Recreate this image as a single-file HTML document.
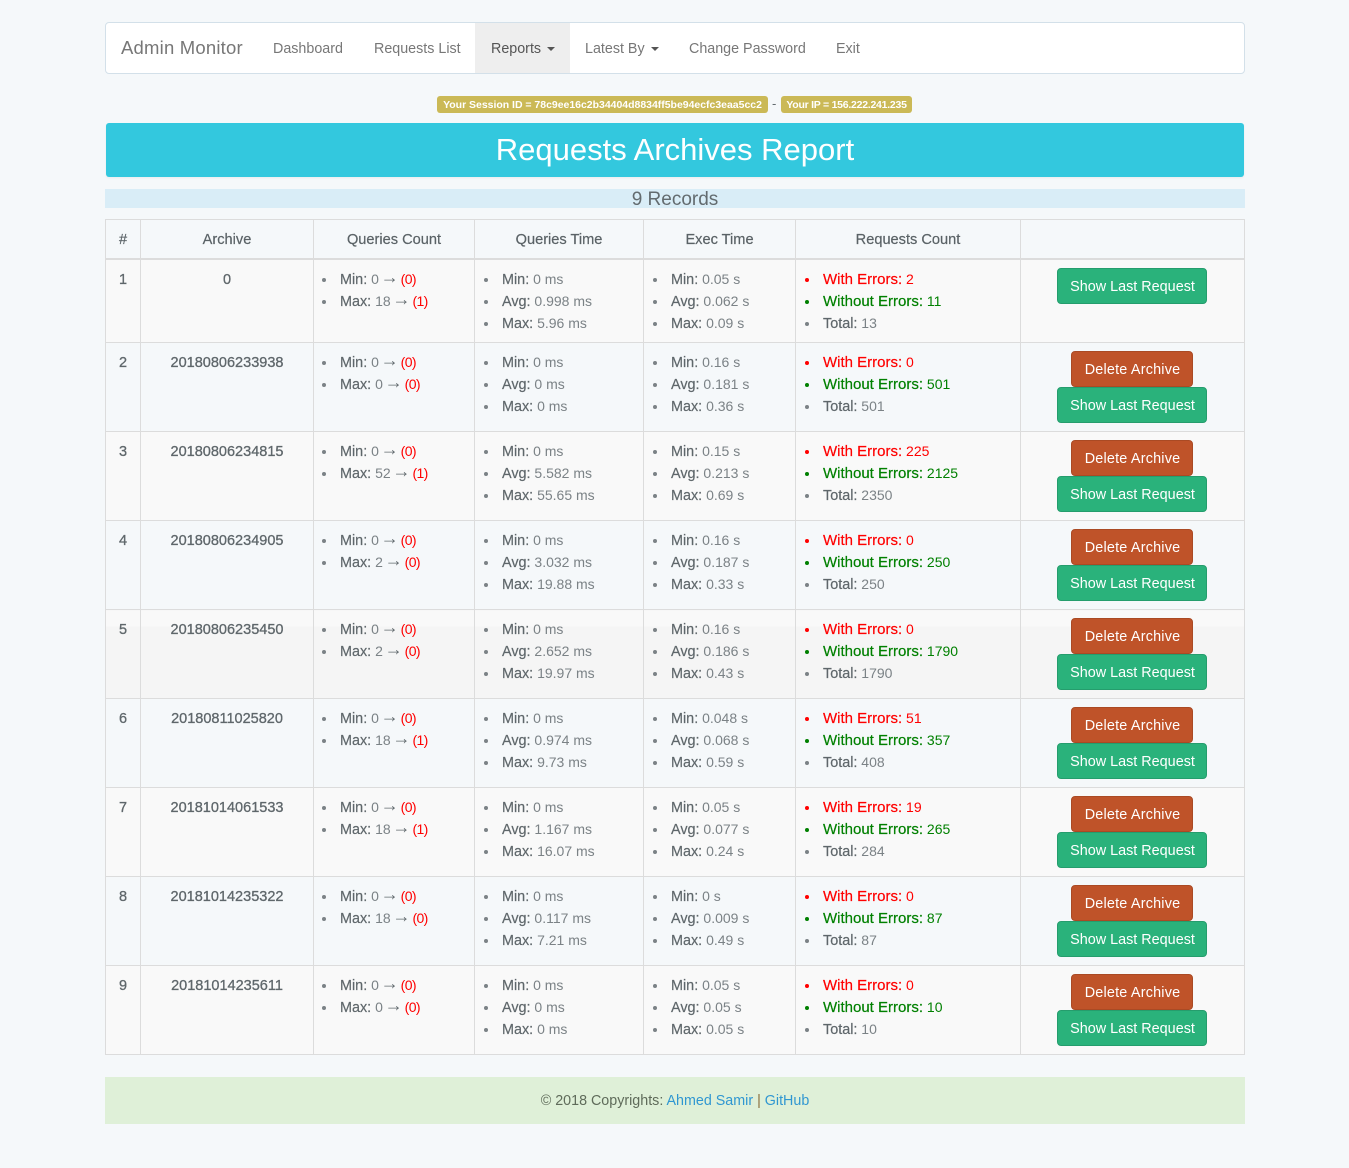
<!DOCTYPE html>
<html><head><meta charset="utf-8"><title>Requests Archives Report</title>
<style>
*{box-sizing:border-box}
html,body{margin:0;padding:0}
body{width:1349px;height:1168px;position:relative;overflow:hidden;background:#f5f8fa;color:#636b6f;font:15px/22px "Liberation Sans",sans-serif}
a{text-decoration:none}
.nav{position:absolute;left:105px;top:22px;width:1140px;height:52px;background:#fff;border:1px solid #d3e0e9;border-radius:4px}
.nav span,.nav i{position:absolute;top:15px;font-style:normal;font-size:14.3px;color:#777;white-space:nowrap}
.nav .brand{left:15px;top:14px;font-size:18.5px;letter-spacing:.2px}
.active{position:absolute;left:369px;top:0;width:95px;height:50px;background:#eee}
.caret{position:absolute;top:24px;width:0;height:0;border-top:4px solid #555;border-left:4px solid transparent;border-right:4px solid transparent}
.badge{position:absolute;top:96px;height:17px;background:#cbb956;border-radius:3px;color:#fff;font:bold 10.5px/18px "Liberation Sans",sans-serif;text-align:center;white-space:nowrap;letter-spacing:-.02px}
.title{position:absolute;left:106px;top:123px;width:1138px;height:54px;background:#33c8de;border-radius:3px;color:#fff;font-size:31px;line-height:53px;text-align:center;box-shadow:0 1px 2px rgba(0,0,0,.05)}
.rec{position:absolute;left:105px;top:189px;width:1140px;height:19px;background:#d9edf7;font-size:19px;line-height:22px;text-align:center}
table{position:absolute;left:105px;top:219px;width:1139px;border-collapse:collapse;table-layout:fixed}
th,td{border:1px solid #dcdcdc;padding:8px;vertical-align:top}
th{height:39px;font-size:14.6px;font-weight:normal;text-align:center;line-height:22px;padding:9px 8px 7px;color:#5a6266;-webkit-text-stroke:.2px;border-bottom:2px solid #dcdcdc}
tr.o td{background:#f9f9f9}
tr.h td{height:89px}
tr.f td{height:83px}
tr.five td{background:linear-gradient(#f9f9f9 16px,#f5f5f5 16px)}
td.c{text-align:center;-webkit-text-stroke:.3px;color:#5f676b;font-size:14.5px;padding-top:9px}
ul{margin:0;padding:0 0 0 18px;list-style:none}
td:nth-child(n+4) ul{padding-left:19px}
li{height:22px;white-space:nowrap;color:#7b8286;font-size:14px;position:relative}
li:before{content:"";position:absolute;left:-18px;top:10px;width:4px;height:4px;border-radius:50%;background:currentColor}
li b{font-weight:normal;color:#5f676b;-webkit-text-stroke:.2px;font-size:14.4px}
li em{font-style:normal;color:#f00;letter-spacing:-.6px}
li u{text-decoration:none;font-size:18px;color:#636b6f;display:inline-block;width:14px;vertical-align:top;line-height:22px;text-align:left;text-indent:-2px;position:relative;top:-2px}
li.r,li.r b{color:#f00}
li.g,li.g b{color:#008000}
li.r b,li.g b{font-size:15px}
td.a{text-align:center;padding:8px 0 0;font-size:0}
.btn{display:block;margin:0 auto;height:36px;border-radius:4px;color:#fff;font-size:14.4px;line-height:36px;text-align:center;position:relative;left:-1px;text-indent:2px}
.s{width:150px;background:#2ab27b;border:1px solid #259d6d}
.d{width:122px;background:#bf5329;border:1px solid #aa4a24;letter-spacing:.2px}
.foot{position:absolute;left:105px;top:1077px;width:1140px;height:47px;background:#dff0d8;text-align:center;line-height:49px;font-size:14.3px;color:#5f6b5a}
.foot a{color:#3097d1}
.foot s{text-decoration:none;color:#8a6d3b}
</style></head><body>
<div class="nav">
<div class="active"></div>
<span class="brand">Admin Monitor</span>
<span style="left:167px">Dashboard</span>
<span style="left:268px">Requests List</span>
<span style="left:385px;color:#555">Reports</span><div class="caret" style="left:441px"></div>
<span style="left:479px">Latest By</span><div class="caret" style="left:545px"></div>
<span style="left:583px">Change Password</span>
<span style="left:730px">Exit</span>
</div>
<div class="badge" style="left:437px;width:331px">Your Session ID = 78c9ee16c2b34404d8834ff5be94ecfc3eaa5cc2</div>
<div style="position:absolute;left:772px;top:93px;font-size:13px">-</div>
<div class="badge" style="left:781px;width:131px;letter-spacing:-.25px">Your IP = 156.222.241.235</div>
<div class="title">Requests Archives Report</div>
<div class="rec">9 Records</div>
<table>
<colgroup><col style="width:35px"><col style="width:173px"><col style="width:161px"><col style="width:169px"><col style="width:152px"><col style="width:225px"><col style="width:224px"></colgroup>
<tr><th>#</th><th>Archive</th><th>Queries Count</th><th>Queries Time</th><th>Exec Time</th><th>Requests Count</th><th></th></tr>

<tr class="o f"><td class="c">1</td><td class="c">0</td>
<td><ul><li><b>Min:</b> 0 <u>→</u> <em>(0)</em></li><li><b>Max:</b> 18 <u>→</u> <em>(1)</em></li></ul></td>
<td><ul><li><b>Min:</b> 0 ms</li><li><b>Avg:</b> 0.998 ms</li><li><b>Max:</b> 5.96 ms</li></ul></td>
<td><ul><li><b>Min:</b> 0.05 s</li><li><b>Avg:</b> 0.062 s</li><li><b>Max:</b> 0.09 s</li></ul></td>
<td><ul><li class="r"><b>With Errors:</b> 2</li><li class="g"><b>Without Errors:</b> 11</li><li><b>Total:</b> 13</li></ul></td>
<td class="a"><a class="btn s">Show Last Request</a></td></tr>

<tr class="h"><td class="c">2</td><td class="c">20180806233938</td>
<td><ul><li><b>Min:</b> 0 <u>→</u> <em>(0)</em></li><li><b>Max:</b> 0 <u>→</u> <em>(0)</em></li></ul></td>
<td><ul><li><b>Min:</b> 0 ms</li><li><b>Avg:</b> 0 ms</li><li><b>Max:</b> 0 ms</li></ul></td>
<td><ul><li><b>Min:</b> 0.16 s</li><li><b>Avg:</b> 0.181 s</li><li><b>Max:</b> 0.36 s</li></ul></td>
<td><ul><li class="r"><b>With Errors:</b> 0</li><li class="g"><b>Without Errors:</b> 501</li><li><b>Total:</b> 501</li></ul></td>
<td class="a"><a class="btn d">Delete Archive</a><a class="btn s">Show Last Request</a></td></tr>

<tr class="o h"><td class="c">3</td><td class="c">20180806234815</td>
<td><ul><li><b>Min:</b> 0 <u>→</u> <em>(0)</em></li><li><b>Max:</b> 52 <u>→</u> <em>(1)</em></li></ul></td>
<td><ul><li><b>Min:</b> 0 ms</li><li><b>Avg:</b> 5.582 ms</li><li><b>Max:</b> 55.65 ms</li></ul></td>
<td><ul><li><b>Min:</b> 0.15 s</li><li><b>Avg:</b> 0.213 s</li><li><b>Max:</b> 0.69 s</li></ul></td>
<td><ul><li class="r"><b>With Errors:</b> 225</li><li class="g"><b>Without Errors:</b> 2125</li><li><b>Total:</b> 2350</li></ul></td>
<td class="a"><a class="btn d">Delete Archive</a><a class="btn s">Show Last Request</a></td></tr>

<tr class="h"><td class="c">4</td><td class="c">20180806234905</td>
<td><ul><li><b>Min:</b> 0 <u>→</u> <em>(0)</em></li><li><b>Max:</b> 2 <u>→</u> <em>(0)</em></li></ul></td>
<td><ul><li><b>Min:</b> 0 ms</li><li><b>Avg:</b> 3.032 ms</li><li><b>Max:</b> 19.88 ms</li></ul></td>
<td><ul><li><b>Min:</b> 0.16 s</li><li><b>Avg:</b> 0.187 s</li><li><b>Max:</b> 0.33 s</li></ul></td>
<td><ul><li class="r"><b>With Errors:</b> 0</li><li class="g"><b>Without Errors:</b> 250</li><li><b>Total:</b> 250</li></ul></td>
<td class="a"><a class="btn d">Delete Archive</a><a class="btn s">Show Last Request</a></td></tr>

<tr class="five h"><td class="c">5</td><td class="c">20180806235450</td>
<td><ul><li><b>Min:</b> 0 <u>→</u> <em>(0)</em></li><li><b>Max:</b> 2 <u>→</u> <em>(0)</em></li></ul></td>
<td><ul><li><b>Min:</b> 0 ms</li><li><b>Avg:</b> 2.652 ms</li><li><b>Max:</b> 19.97 ms</li></ul></td>
<td><ul><li><b>Min:</b> 0.16 s</li><li><b>Avg:</b> 0.186 s</li><li><b>Max:</b> 0.43 s</li></ul></td>
<td><ul><li class="r"><b>With Errors:</b> 0</li><li class="g"><b>Without Errors:</b> 1790</li><li><b>Total:</b> 1790</li></ul></td>
<td class="a"><a class="btn d">Delete Archive</a><a class="btn s">Show Last Request</a></td></tr>

<tr class="h"><td class="c">6</td><td class="c">20180811025820</td>
<td><ul><li><b>Min:</b> 0 <u>→</u> <em>(0)</em></li><li><b>Max:</b> 18 <u>→</u> <em>(1)</em></li></ul></td>
<td><ul><li><b>Min:</b> 0 ms</li><li><b>Avg:</b> 0.974 ms</li><li><b>Max:</b> 9.73 ms</li></ul></td>
<td><ul><li><b>Min:</b> 0.048 s</li><li><b>Avg:</b> 0.068 s</li><li><b>Max:</b> 0.59 s</li></ul></td>
<td><ul><li class="r"><b>With Errors:</b> 51</li><li class="g"><b>Without Errors:</b> 357</li><li><b>Total:</b> 408</li></ul></td>
<td class="a"><a class="btn d">Delete Archive</a><a class="btn s">Show Last Request</a></td></tr>

<tr class="o h"><td class="c">7</td><td class="c">20181014061533</td>
<td><ul><li><b>Min:</b> 0 <u>→</u> <em>(0)</em></li><li><b>Max:</b> 18 <u>→</u> <em>(1)</em></li></ul></td>
<td><ul><li><b>Min:</b> 0 ms</li><li><b>Avg:</b> 1.167 ms</li><li><b>Max:</b> 16.07 ms</li></ul></td>
<td><ul><li><b>Min:</b> 0.05 s</li><li><b>Avg:</b> 0.077 s</li><li><b>Max:</b> 0.24 s</li></ul></td>
<td><ul><li class="r"><b>With Errors:</b> 19</li><li class="g"><b>Without Errors:</b> 265</li><li><b>Total:</b> 284</li></ul></td>
<td class="a"><a class="btn d">Delete Archive</a><a class="btn s">Show Last Request</a></td></tr>

<tr class="h"><td class="c">8</td><td class="c">20181014235322</td>
<td><ul><li><b>Min:</b> 0 <u>→</u> <em>(0)</em></li><li><b>Max:</b> 18 <u>→</u> <em>(0)</em></li></ul></td>
<td><ul><li><b>Min:</b> 0 ms</li><li><b>Avg:</b> 0.117 ms</li><li><b>Max:</b> 7.21 ms</li></ul></td>
<td><ul><li><b>Min:</b> 0 s</li><li><b>Avg:</b> 0.009 s</li><li><b>Max:</b> 0.49 s</li></ul></td>
<td><ul><li class="r"><b>With Errors:</b> 0</li><li class="g"><b>Without Errors:</b> 87</li><li><b>Total:</b> 87</li></ul></td>
<td class="a"><a class="btn d">Delete Archive</a><a class="btn s">Show Last Request</a></td></tr>

<tr class="o h"><td class="c">9</td><td class="c">20181014235611</td>
<td><ul><li><b>Min:</b> 0 <u>→</u> <em>(0)</em></li><li><b>Max:</b> 0 <u>→</u> <em>(0)</em></li></ul></td>
<td><ul><li><b>Min:</b> 0 ms</li><li><b>Avg:</b> 0 ms</li><li><b>Max:</b> 0 ms</li></ul></td>
<td><ul><li><b>Min:</b> 0.05 s</li><li><b>Avg:</b> 0.05 s</li><li><b>Max:</b> 0.05 s</li></ul></td>
<td><ul><li class="r"><b>With Errors:</b> 0</li><li class="g"><b>Without Errors:</b> 10</li><li><b>Total:</b> 10</li></ul></td>
<td class="a"><a class="btn d">Delete Archive</a><a class="btn s">Show Last Request</a></td></tr>
</table>
<div class="foot">© 2018 Copyrights: <a>Ahmed Samir</a> <s>|</s> <a>GitHub</a></div>
</body></html>
